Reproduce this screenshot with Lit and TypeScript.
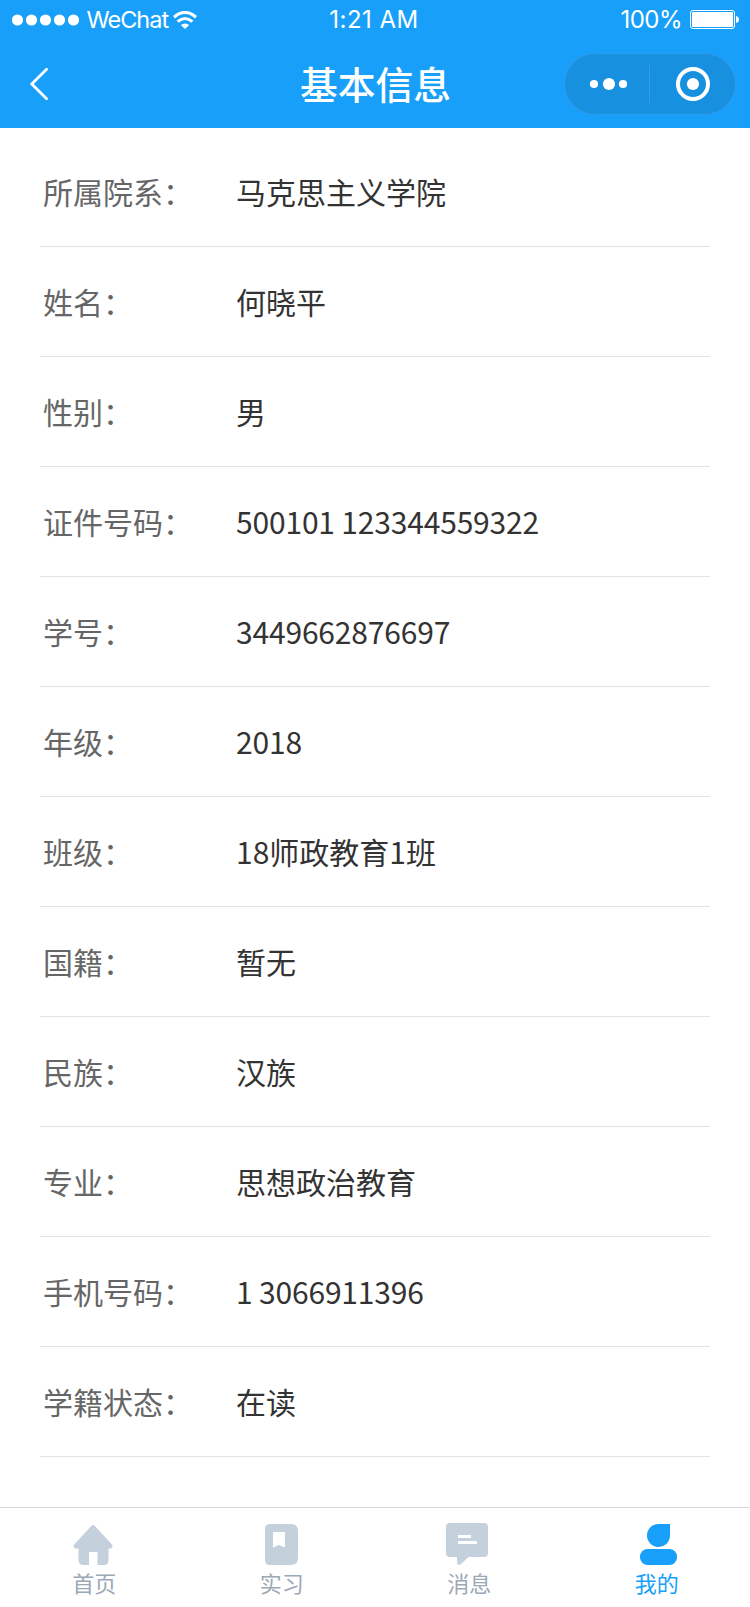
import { LitElement, html, css, svg } from "lit";
import { customElement } from "lit/decorators.js";
import { classMap } from "lit/directives/class-map.js";

const FIELDS: [string, string][] = [
  ["所属院系：", "马克思主义学院"],
  ["姓名：", "何晓平"],
  ["性别：", "男"],
  ["证件号码：", "500101 123344559322"],
  ["学号：", "3449662876697"],
  ["年级：", "2018"],
  ["班级：", "18师政教育1班"],
  ["国籍：", "暂无"],
  ["民族：", "汉族"],
  ["专业：", "思想政治教育"],
  ["手机号码：", "1 3066911396"],
  ["学籍状态：", "在读"],
];

const TABS = [
  {
    label: "首页",
    icon: svg`<path d="M19.3 2.9Q21 1.1 22.8 2.9L40 21.4Q41 22.8 40.3 24.3Q39.7 25.5 38 25.5H36.5V37Q36.5 42 31.5 42H25.5V29H17V42H11.5Q6.5 42 6.5 37V25.5H4.5Q2.5 25.5 1.8 24.2Q1 22.6 2.4 21.3Z"/>`,
  },
  {
    label: "实习",
    icon: svg`<path fill-rule="evenodd" d="M10 1H31Q38 1 38 8V35Q38 42 31 42H10Q5 42 5 37V6Q5 1 10 1ZM13 9V24.5L19 22L25 24.5V9Z"/>`,
  },
  {
    label: "消息",
    icon: svg`<path fill-rule="evenodd" d="M3 0H37Q41 0 41 4V30Q41 34 37 34H21.5L14 41Q10 43.5 10 39V34H3Q-1 34 -1 30V4Q-1 0 3 0ZM11 12V15H24V12ZM11 18V21H30V18Z"/>`,
  },
  {
    label: "我的",
    active: true,
    icon: svg`<path d="M35 1V13A11.5 11.5 0 1 1 23.5 1Z"/><rect x="5" y="26" width="37" height="16" rx="7.5"/>`,
  },
];

@customElement("status-bar")
class StatusBar extends LitElement {
  static styles = css`
    :host {
      display: grid;
      grid-template-columns: 1fr auto 1fr;
      align-items: center;
      height: 39px;
      padding: 0 11px 1px 12px;
      color: #fff;
      font: 24px/38px Inter, sans-serif;
    }
    .side { display: flex; align-items: center; }
    .end { justify-content: flex-end; }
    .carrier { margin: 0 5px 0 7.5px; font-size: 23.5px; letter-spacing: -1px; }
    .time { letter-spacing: 0.5px; margin-right: 3px; }
    .percent { margin-right: 8px; letter-spacing: -0.5px; }
    svg { display: block; fill: #fff; }
  `;
  render() {
    return html`
      <div class="side">
        <svg width="67" height="12">
          ${[5.5, 19.5, 33.5, 47.5, 61.5].map((x) => svg`<circle cx=${x} cy="6" r="5.6" />`)}
        </svg>
        <span class="carrier">WeChat</span>
        <svg width="24" height="18" viewBox="0 0 24 18">
          <g fill="none" stroke="#fff" stroke-width="3.1">
            <path d="M1 6.2Q12 -3.2 23 6.2" />
            <path d="M4.6 10.6Q12 4.4 19.4 10.6" />
          </g>
          <path d="M7.8 14Q12 10.8 16.2 14L12 18Z" />
        </svg>
      </div>
      <span class="time">1:21 AM</span>
      <div class="side end">
        <span class="percent">100%</span>
        <svg width="49" height="19" viewBox="0 0 49 19">
          <rect x="0.5" y="0.5" width="44" height="18" rx="2.5" fill="none" stroke="#fff" />
          <rect x="2" y="2" width="41" height="15" rx="1" />
          <path d="M46 6Q49 6.5 49 9.5T46 13Z" />
        </svg>
      </div>
    `;
  }
}

@customElement("nav-bar")
class NavBar extends LitElement {
  static styles = css`
    :host {
      display: grid;
      grid-template-columns: 1fr auto 1fr;
      align-items: center;
      height: 88px;
      padding: 0 14px 0 29px;
      box-sizing: border-box;
      color: #fff;
    }
    .title {
      font: 500 37.8px/56px "Noto Sans CJK SC", sans-serif;
      margin: 0 14px 2px 0;
    }
    .back, .capsule { display: block; }
    .capsule { justify-self: end; }
  `;
  render() {
    return html`
      <svg class="back" width="22" height="34" viewBox="0 0 22 34">
        <path d="M17.6 2.2L2.8 17L17.6 31.8" fill="none" stroke="#fff" stroke-width="2.8" stroke-linecap="round" />
      </svg>
      <span class="title">基本信息</span>
      <svg class="capsule" width="172" height="62" viewBox="0 0 172 62">
        <rect x="0.5" y="0.5" width="171" height="61" rx="30.5" fill="#1890e0" stroke="#2e9ced" />
        <path d="M85.5 12V50" stroke="#389de5" />
        <g fill="#fff">
          <circle cx="30" cy="31" r="4.1" />
          <circle cx="45" cy="31" r="6.1" />
          <circle cx="59" cy="31" r="4.1" />
          <circle cx="129" cy="31" r="6.1" />
        </g>
        <circle cx="129" cy="31" r="15" fill="none" stroke="#fff" stroke-width="4" />
      </svg>
    `;
  }
}

@customElement("tab-bar")
class TabBar extends LitElement {
  static styles = css`
    :host {
      display: grid;
      grid-template-columns: repeat(4, 1fr);
      height: 100px;
      box-sizing: border-box;
      border-top: 1px solid #d3d5d8;
      background: #fff;
    }
    .tab {
      display: flex;
      flex-direction: column;
      align-items: center;
      padding-top: 15px;
      color: #9ba8b5;
      fill: #c4d0dc;
      font: 22px/32px "Noto Sans CJK SC", sans-serif;
    }
    .active { color: #189ff9; fill: #189ff9; }
    .tab span { margin-left: 1px; }
    svg { display: block; overflow: visible; }
  `;
  render() {
    return TABS.map(
      (t) => html`<div class=${classMap({ tab: true, active: !!t.active })}>
        <svg width="43" height="43" viewBox="0 0 43 43">${t.icon}</svg>
        <span>${t.label}</span>
      </div>`
    );
  }
}

@customElement("app-root")
class AppRoot extends LitElement {
  static styles = css`
    :host {
      display: flex;
      flex-direction: column;
      height: 1607px;
      background: #fff;
    }
    header { background: #189ff9; height: 128px; }
    main {
      flex: 1;
      padding: 9px 40px 0;
      font: 30px/44px "Noto Sans CJK SC", sans-serif;
    }
    .row {
      display: grid;
      grid-template-columns: 193px 1fr;
      align-items: center;
      height: 110px;
      box-sizing: border-box;
      padding: 0 0 2px 3px;
      border-bottom: 1px solid #e3e3e3;
    }
    .label { color: #666; }
    .value { color: #333; }
    .numeric { letter-spacing: -0.18px; }
  `;
  render() {
    return html`
      <header><status-bar></status-bar><nav-bar></nav-bar></header>
      <main>
        ${FIELDS.map(
          ([label, value]) => html`<div class="row">
            <span class="label">${label}</span>
            <span class=${classMap({ value: true, numeric: /^[\d ]+$/.test(value) })}>${value}</span>
          </div>`
        )}
      </main>
      <tab-bar></tab-bar>
    `;
  }
}
